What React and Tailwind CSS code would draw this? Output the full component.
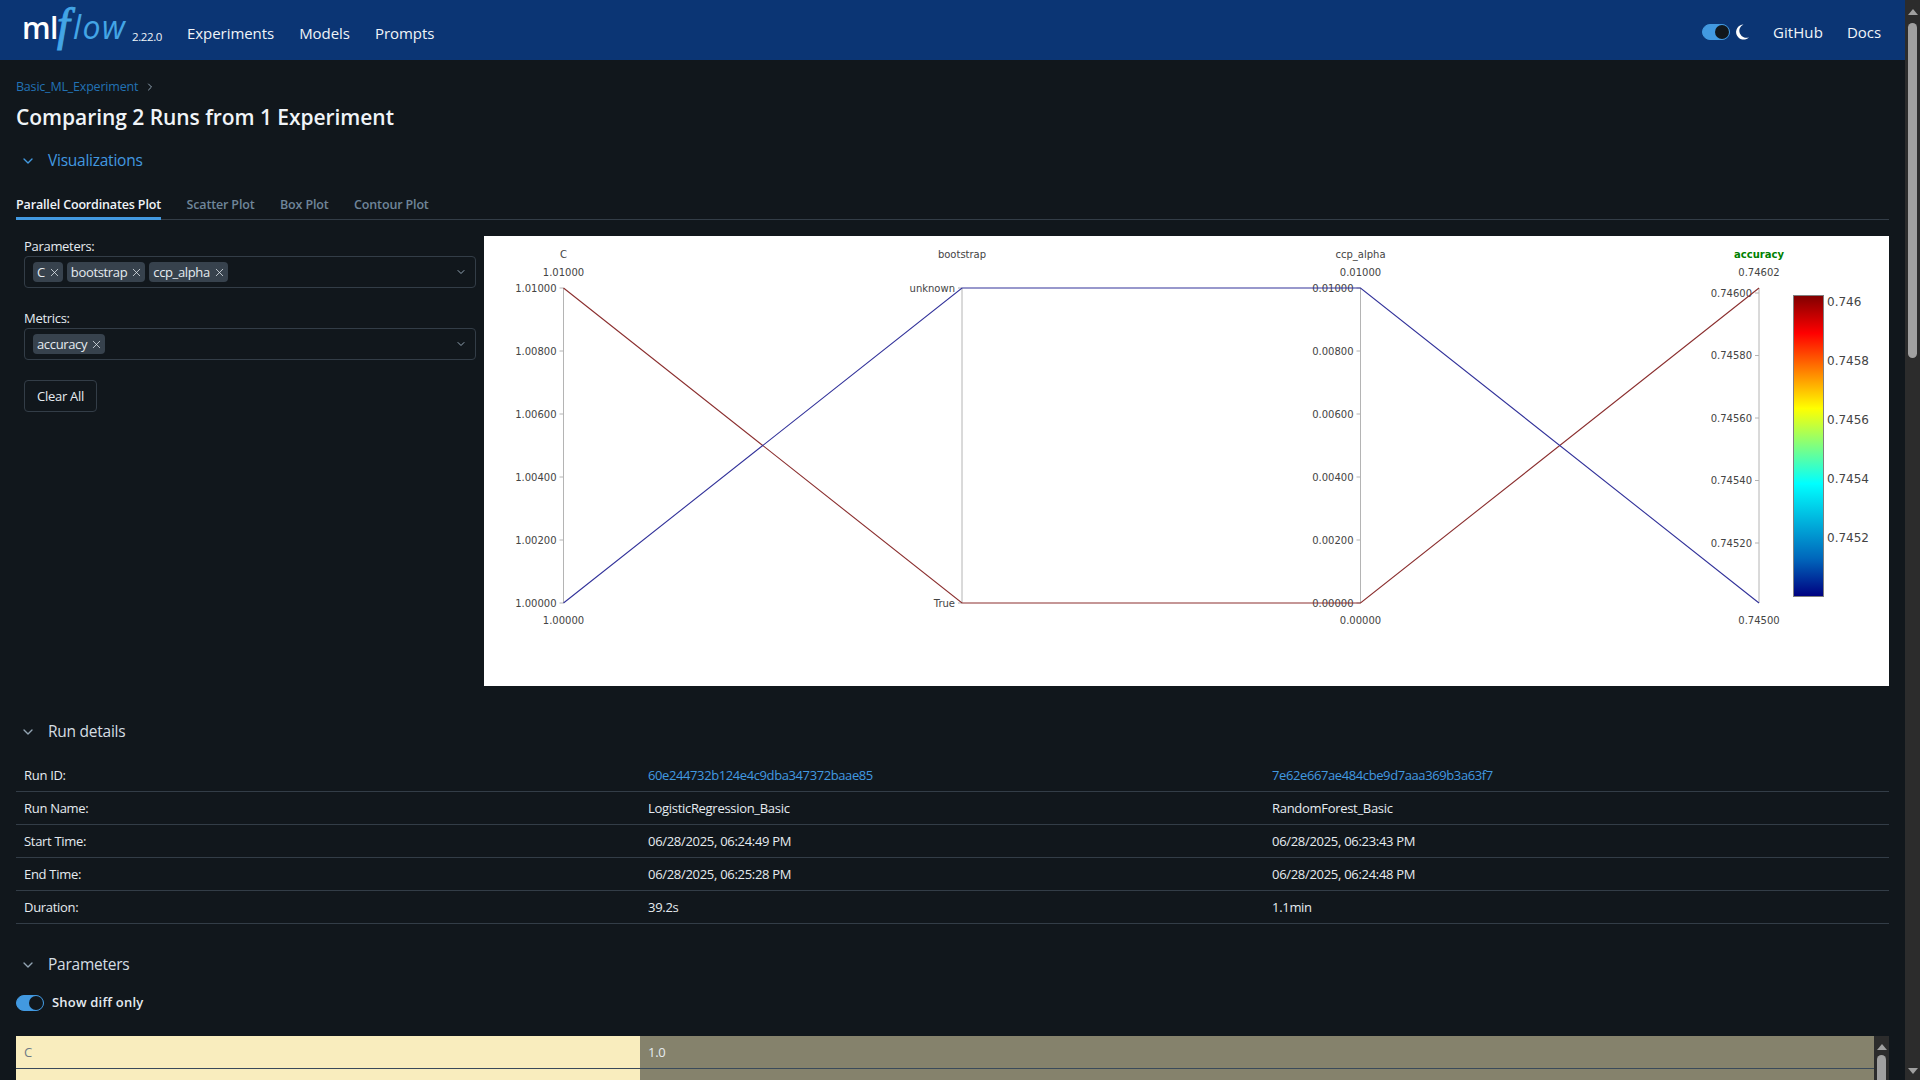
import React from "react";
import { ChevronDown, ChevronRight, X } from "lucide-react";

const Chevron = ({ className = "" }) => <ChevronDown size={16} strokeWidth={2} className={className} />;

function Section({ title, blue }) {
  return (
    <div className="flex items-center h-6">
      <Chevron className={`ml-1 mr-[12px] ${blue ? "text-[#4299e0]" : "text-[#92a4b3]"}`} />
      <span className={`text-[15.5px] tracking-[-0.25px] ${blue ? "text-[#4299e0]" : "text-[#d5dde3]"}`}>{title}</span>
    </div>
  );
}

function Chip({ label }) {
  return (
    <span className="flex items-center h-5 pl-1 pr-[2px] gap-[3px] rounded bg-[#37424d] text-[#e5ebf0] text-[13px] leading-5 tracking-[-0.35px]">
      {label}
      <X size={13} strokeWidth={1.4} className="text-[#e5ebf0]" />
    </span>
  );
}

function MultiSelect({ chips }) {
  return (
    <div className="h-8 flex items-center border border-[#333d47] rounded pl-2 pr-2">
      <div className="flex flex-1 gap-1">
        {chips.map((c) => <Chip key={c} label={c} />)}
      </div>
      <ChevronDown size={12} strokeWidth={2} className="text-[#92a4b3]" />
    </div>
  );
}

function Switch({ className = "" }) {
  return (
    <div className={`w-7 h-4 rounded-full bg-[#4299e0] border border-[#4299e0] flex justify-end items-center ${className}`}>
      <div className="w-[14px] h-[14px] rounded-full bg-[#11171c]" />
    </div>
  );
}

const AXES = [79.5, 478, 876.5, 1275];
const TOP = 52;
const BOTTOM = 367;

function Axis({ x, title, titleColor, titleBold, rangeTop, rangeBottom, ticks }) {
  return (
    <g>
      <text x={x} y={18} dy="3.5" textAnchor="middle" fontSize="10" fill={titleColor || "#444"} fontWeight={titleBold ? "bold" : "normal"}>{title}</text>
      {rangeTop && <text x={x} y={36} dy="3.5" textAnchor="middle" fontSize="10" fill="#444">{rangeTop}</text>}
      {rangeBottom && <text x={x} y={384} dy="3.5" textAnchor="middle" fontSize="10" fill="#444">{rangeBottom}</text>}
      <line x1={x} x2={x} y1={TOP} y2={BOTTOM} stroke="#b4b4b4" strokeWidth="1" />
      {ticks.map(([label, y]) => (
        <g key={label}>
          <line x1={x - 4} x2={x} y1={y} y2={y} stroke="#b4b4b4" strokeWidth="1" />
          <text x={x - 7} y={y} dy="3.5" textAnchor="end" fontSize="10" fill="#444">{label}</text>
        </g>
      ))}
    </g>
  );
}

function Plot() {
  const linear = ["01000", "00800", "00600", "00400", "00200", "00000"];
  const ys = [52, 115, 178, 241, 304, 367];
  return (
    <svg width="1405" height="450" viewBox="0 0 1405 450" fontFamily="'DejaVu Sans', sans-serif" letterSpacing="0" className="block tracking-normal">
      <defs>
        <linearGradient id="jet" x1="0" y1="0" x2="0" y2="1">
          <stop offset="0" stopColor="#800000" />
          <stop offset="0.125" stopColor="#ff0000" />
          <stop offset="0.375" stopColor="#ffff00" />
          <stop offset="0.625" stopColor="#00ffff" />
          <stop offset="0.875" stopColor="#0066bb" />
          <stop offset="1" stopColor="#000080" />
        </linearGradient>
      </defs>
      <Axis x={AXES[0]} title="C" rangeTop="1.01000" rangeBottom="1.00000" ticks={linear.map((s, i) => [`1.${s}`, ys[i]])} />
      <Axis x={AXES[1]} title="bootstrap" ticks={[["unknown", 52], ["True", 367]]} />
      <Axis x={AXES[2]} title="ccp_alpha" rangeTop="0.01000" rangeBottom="0.00000" ticks={linear.map((s, i) => [`0.${s}`, ys[i]])} />
      <Axis x={AXES[3]} title="accuracy" titleColor="#008000" titleBold rangeTop="0.74602" rangeBottom="0.74500"
        ticks={[["0.74600", 57], ["0.74580", 119.5], ["0.74560", 182], ["0.74540", 244.5], ["0.74520", 307]]} />
      <polyline fill="none" stroke="#8b2f2f" strokeWidth="1.1" points={`${AXES[0]},${TOP} ${AXES[1]},${BOTTOM} ${AXES[2]},${BOTTOM} ${AXES[3]},${TOP}`} />
      <polyline fill="none" stroke="#32329a" strokeWidth="1.1" points={`${AXES[0]},${BOTTOM} ${AXES[1]},${TOP} ${AXES[2]},${TOP} ${AXES[3]},${BOTTOM}`} />
      <rect x="1309.5" y="59.5" width="30" height="301" fill="url(#jet)" stroke="#808080" strokeWidth="1" />
      {[["0.746", 65], ["0.7458", 124.5], ["0.7456", 183], ["0.7454", 242], ["0.7452", 301]].map(([t, y]) => (
        <text key={t} x="1343" y={y} dy="4.5" fontSize="12" fill="#444">{t}</text>
      ))}
    </svg>
  );
}

const rows = [
  ["Run ID:", "60e244732b124e4c9dba347372baae85", "7e62e667ae484cbe9d7aaa369b3a63f7"],
  ["Run Name:", "LogisticRegression_Basic", "RandomForest_Basic"],
  ["Start Time:", "06/28/2025, 06:24:49 PM", "06/28/2025, 06:23:43 PM"],
  ["End Time:", "06/28/2025, 06:25:28 PM", "06/28/2025, 06:24:48 PM"],
  ["Duration:", "39.2s", "1.1min"],
];

function Logo() {
  return (
    <svg width="106" height="54" viewBox="0 0 106 54" letterSpacing="0" className="block overflow-visible" fontFamily="'Open Sans', sans-serif">
      <text x="0" y="36" fontSize="30" fontWeight="600" fill="#ffffff" letterSpacing="-0.5">ml</text>
      <text x="35" y="37" fontSize="46" fontStyle="italic" fontFamily="'Liberation Serif', serif" fill="#43a5e6" stroke="#43a5e6" strokeWidth="1">f</text>
      <text x="51" y="36" fontSize="32" fontStyle="italic" fontWeight="500" fill="#43a5e6" letterSpacing="1.5">low</text>
    </svg>
  );
}

function Crescent() {
  return (
    <svg width="14" height="16" viewBox="0 0 14 16" className="ml-[6px] mr-[23px] block">
      <path d="M7.5 0.5 A7.5 7.5 0 1 0 13 13.2 A6.6 6.6 0 0 1 7.5 0.5 Z" fill="#ffffff" />
    </svg>
  );
}

export default function App() {
  return (
    <div className="h-screen w-full overflow-hidden flex bg-[#11171c] text-[#e5ebf0] font-['Open_Sans',sans-serif] text-[13px] tracking-[-0.3px]">
      <div className="flex-1 min-w-0 flex flex-col">
        <header className="h-[60px] shrink-0 bg-[#0b3574] flex items-center text-[15px] tracking-[-0.05px] text-[#f0f4f8] pl-[22px] pr-[24px]">
          <Logo />
          <span className="text-[11.5px] ml-[4px] mt-[14px] tracking-[-0.4px] w-[55px]">2.22.0</span>
          <nav className="flex gap-[25px] mt-[6px]">
            <span>Experiments</span>
            <span>Models</span>
            <span>Prompts</span>
          </nav>
          <div className="ml-auto flex items-center mt-1">
            <Switch />
            <Crescent />
            <span className="mr-6 tracking-[0.1px]">GitHub</span>
            <span>Docs</span>
          </div>
        </header>

        <main className="flex-1 px-4 overflow-hidden">
          <div className="mt-[17px] h-5 flex items-center text-[#2272b4] text-[12.5px] tracking-[-0.2px]">
            Basic_ML_Experiment
            <ChevronRight size={12} className="ml-[6px] text-[#92a4b3]" />
          </div>
          <h1 className="mt-1 h-8 leading-8 text-[21px] font-semibold text-[#f0f4f8] tracking-[-0.05px]">Comparing 2 Runs from 1 Experiment</h1>
          <div className="mt-4"><Section title="Visualizations" blue /></div>

          <div className="mt-[23px] h-[24px] flex gap-[25.5px] border-b border-[#333d47] text-[12.5px] font-semibold text-[#6f8599] tracking-[-0.15px]">
            <span className="h-[24px] text-[#f0f4f8] border-b-[3px] border-[#4299e0]">Parallel Coordinates Plot</span>
            <span>Scatter Plot</span>
            <span>Box Plot</span>
            <span>Contour Plot</span>
          </div>

          <div className="mt-4 flex h-[450px]">
            <div className="w-[468px] shrink-0 pl-2 pr-2">
              <div className="h-5 leading-5">Parameters:</div>
              <MultiSelect chips={["C", "bootstrap", "ccp_alpha"]} />
              <div className="mt-5 h-5 leading-5">Metrics:</div>
              <MultiSelect chips={["accuracy"]} />
              <button className="mt-5 h-8 w-[73px] pt-px border border-[#333d47] rounded text-[13px] text-[#e5ebf0]">Clear All</button>
            </div>
            <div className="w-[1405px] shrink-0 bg-white"><Plot /></div>
          </div>

          <div className="mt-[34px]"><Section title="Run details" /></div>

          <div className="mt-[15px]">
            {rows.map((r, i) => (
              <div key={r[0]} className="grid grid-cols-[624px_624px_1fr] h-[33px] pt-px items-center border-b border-[#333d47] pl-2">
                <span>{r[0]}</span>
                <span className={i === 0 ? "text-[#4299e0] tracking-[-0.4px]" : ""}>{r[1]}</span>
                <span className={i === 0 ? "text-[#4299e0] tracking-[-0.4px]" : ""}>{r[2]}</span>
              </div>
            ))}
          </div>

          <div className="mt-[29px]"><Section title="Parameters" /></div>

          <div className="mt-4 flex items-center gap-2 h-5">
            <Switch />
            <span className="font-semibold tracking-[0.2px]">Show diff only</span>
          </div>

          <div className="mt-[23px] flex">
            <div className="flex-1 min-w-0">
              {[["C", "1.0"], ["", ""]].map(([a, b], i) => (
                <div key={i} className="grid grid-cols-[624px_1fr] h-[33px] border-b border-[#3a4a5a]">
                  <div className="bg-[#f9edbe] text-[#6f7a85] pl-2 pt-px flex items-center">{a}</div>
                  <div className="bg-[#85826c] text-[#e5ebf0] pl-2 pt-px flex items-center">{b}</div>
                </div>
              ))}
            </div>
            <div className="w-[15px] shrink-0 bg-[#2c2c2c] flex flex-col items-center">
              <div className="mt-[8px] w-0 h-0 border-x-[5px] border-x-transparent border-b-[6px] border-b-[#a0a0a0]" />
              <div className="mt-[5px] w-[9px] h-[40px] rounded-t-full bg-[#a0a0a0]" />
            </div>
          </div>
        </main>
      </div>

      <div className="w-[15px] shrink-0 bg-[#2c2c2c] flex flex-col items-center">
        <div className="mt-[9px] w-0 h-0 border-x-[5px] border-x-transparent border-b-[6px] border-b-[#a0a0a0]" />
        <div className="mt-[8px] w-[9px] h-[335px] rounded-full bg-[#a0a0a0]" />
        <div className="mt-auto mb-[6px] w-0 h-0 border-x-[5px] border-x-transparent border-t-[6px] border-t-[#a0a0a0]" />
      </div>
    </div>
  );
}
